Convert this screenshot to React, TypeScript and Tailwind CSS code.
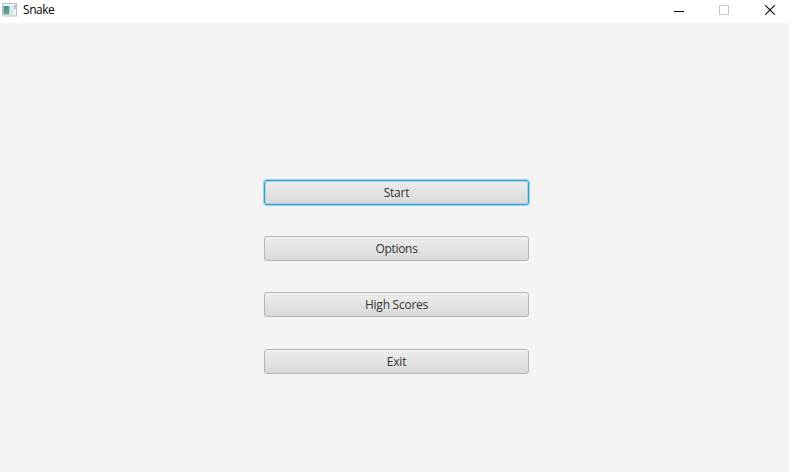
const items = [
  { label: "Start", focused: true, text: "tracking-[-0.25px]", gap: "" },
  { label: "Options", focused: false, text: "tracking-[-0.3px]", gap: "mt-[31px]" },
  { label: "High Scores", focused: false, text: "tracking-[-0.25px]", gap: "mt-[31px]" },
  { label: "Exit", focused: false, text: "pt-px tracking-[-0.2px]", gap: "mt-[32px]" },
];

function AppIcon() {
  return (
    <svg width="16" height="14" viewBox="0 0 16 14" aria-hidden="true">
      <defs>
        <linearGradient id="pane" x1="0" y1="0" x2="1" y2="1">
          <stop offset="0" stopColor="#438794" />
          <stop offset="1" stopColor="#78ad94" />
        </linearGradient>
      </defs>
      <rect x="0.5" y="0.5" width="14" height="12.5" fill="#f1f4f5" stroke="#bcc0c4" />
      <rect x="1.5" y="3" width="6" height="8.5" fill="url(#pane)" />
      <rect x="8.5" y="3" width="3" height="8.5" fill="#d3e6e0" />
      <rect x="12" y="2" width="2" height="4" fill="#b5bccb" />
    </svg>
  );
}

function TitleBar() {
  return (
    <header className="flex h-[23px] items-start justify-between bg-white">
      <div className="flex pl-[2px]">
        <div className="pt-[3px]">
          <AppIcon />
        </div>
        <span className="pt-[1px] pl-[5px] text-[12px] leading-[18px] tracking-[-0.45px] text-black">Snake</span>
      </div>
      <div className="flex pr-[14px]">
        <button aria-label="Minimize" className="mr-[34px] pt-[4px]">
          <svg width="11" height="11" viewBox="0 0 11 11">
            <rect x="0" y="6" width="10" height="1" fill="#000" />
          </svg>
        </button>
        <button aria-label="Maximize" className="mr-[35px] pt-[5px]">
          <svg width="11" height="11" viewBox="0 0 11 11">
            <rect x="0.5" y="0.5" width="9" height="9" fill="none" stroke="#c8c8c8" />
          </svg>
        </button>
        <button aria-label="Close" className="pt-[5px]">
          <svg width="10" height="11" viewBox="0 0 10 11">
            <path d="M0.3 0.3L9.7 9.7M9.7 0.3L0.3 9.7" stroke="#000" strokeWidth="1.15" />
          </svg>
        </button>
      </div>
    </header>
  );
}

export default function App() {
  return (
    <div className="flex h-[472px] w-[789px] flex-col overflow-hidden bg-[#f4f4f4] font-['Open_Sans','Noto_Sans',sans-serif]">
      <TitleBar />
      <main className="flex flex-col items-start pt-[157px] pl-[264px]">
        {items.map((item) => (
          <button
            key={item.label}
            className={`flex h-[25px] w-[265px] items-center justify-center rounded-[3px] border bg-linear-to-b from-[#ededed] to-[#d9d9d9] text-[12px] leading-[16px] text-[#333333] ${item.gap} ${
              item.focused
                ? "border-[#3b9fc8] shadow-[0_0_0_1px_#8fd6ee,inset_0_0_0_1px_#a3d5e8]"
                : "border-[#b5b5b5] shadow-[inset_0_1px_0_#f4f4f4]"
            }`}
          >
            <span className={item.text}>{item.label}</span>
          </button>
        ))}
      </main>
    </div>
  );
}
